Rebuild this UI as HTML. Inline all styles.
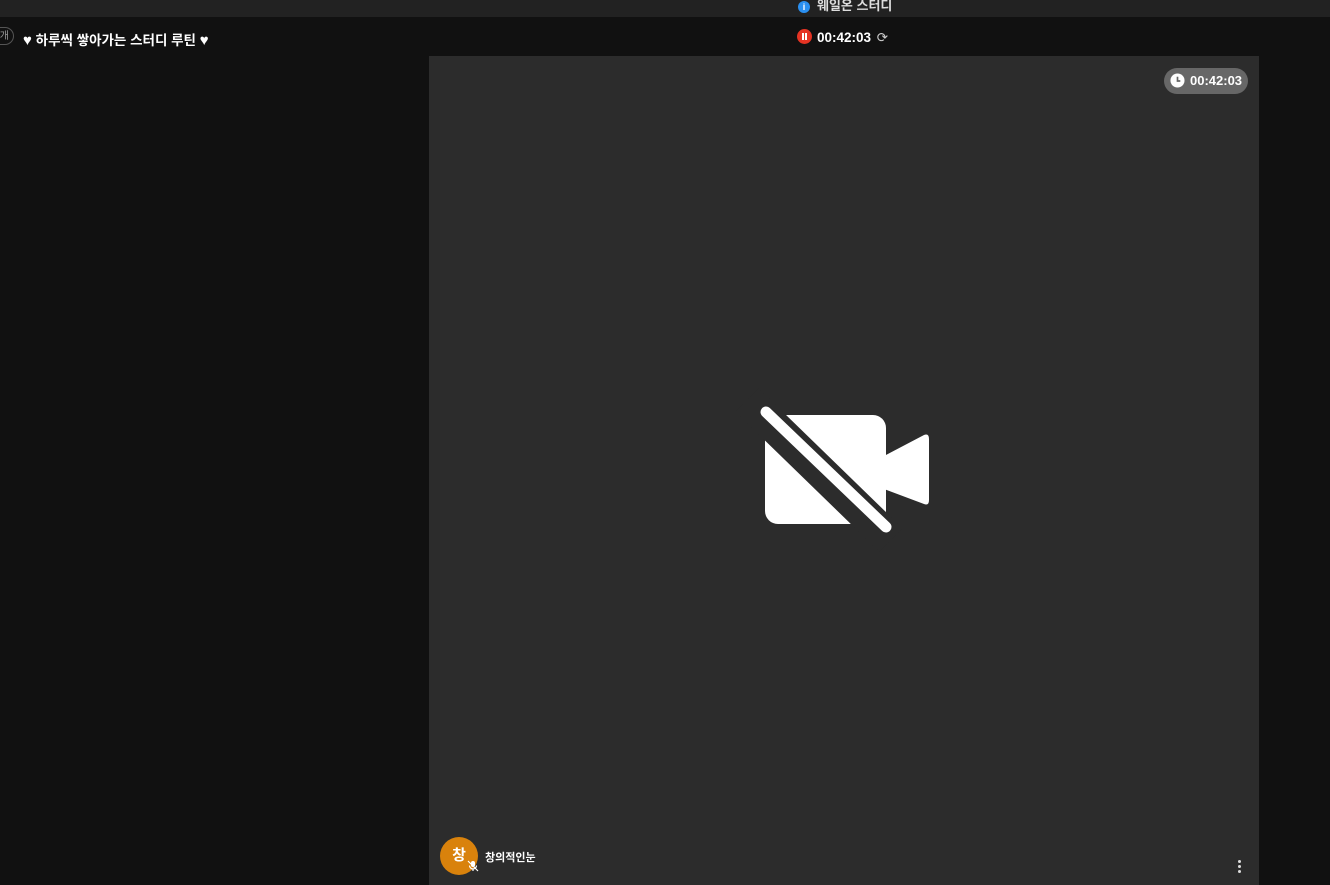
<!DOCTYPE html>
<html><head><meta charset="utf-8"><style>
html,body{margin:0;padding:0;width:1330px;height:885px;overflow:hidden;background:#111;font-family:"Liberation Sans","Noto Sans CJK KR",sans-serif;color:#fff}
.top{position:absolute;left:0;top:0;width:1330px;height:17px;background:#222}
.t1{position:absolute;left:798px;top:-5px;font-size:13px;font-weight:bold;color:#ddd;white-space:nowrap}
.info{display:inline-block;width:12px;height:12px;border-radius:50%;background:#2a8ff0;vertical-align:middle;margin-right:7px;font-size:9px;text-align:center;line-height:12px;color:#fff}
.title{position:absolute;left:23px;top:29px;font-size:13.5px;font-weight:bold;white-space:nowrap}
.heart{font-size:15px;line-height:13px}
.pill{position:absolute;left:-14px;top:27px;width:28px;height:18px;border:1px solid #555;border-radius:10px;font-size:10px;color:#999;line-height:18px;text-align:right;padding-right:4px;box-sizing:border-box}
.timer{position:absolute;left:797px;top:29px;font-size:13.5px;font-weight:bold;white-space:nowrap}
.rec{display:inline-block;width:15px;height:15px;border-radius:50%;background:#e53323;vertical-align:-2px;margin-right:5px;position:relative}
.rec:before,.rec:after{content:"";position:absolute;top:4px;width:2px;height:7px;background:#fff}
.rec:before{left:5px}.rec:after{left:8px}
.tile{position:absolute;left:429px;top:56px;width:830px;height:829px;background:#2c2c2c}
.clock{position:absolute;left:735px;top:12px;width:84px;height:26px;border-radius:13px;background:#676767;font-size:13px;font-weight:bold;line-height:26px}
.av{position:absolute;left:11px;top:781px;width:38px;height:38px;border-radius:50%;background:#d9820c;font-size:15px;font-weight:bold;text-align:center;line-height:38px}
.name{position:absolute;left:56px;top:793px;font-size:11px;font-weight:bold}
</style></head><body>
<div class="top"><div class="t1"><span class="info">i</span>웨일온 스터디</div></div>
<div class="pill">개</div>
<div class="title"><span class="heart">♥</span> 하루씩 쌓아가는 스터디 루틴 <span class="heart">♥</span></div>
<div class="timer"><span class="rec"></span>00:42:03 <span style="font-weight:normal;color:#ccc;margin-left:2px">⟳</span></div>
<div class="tile">
<div class="clock"><svg width="15" height="15" style="position:absolute;left:6px;top:5px" viewBox="0 0 16 16"><circle cx="8" cy="8" r="7.5" fill="#fff"/><path d="M8 4v4.5h3" stroke="#676767" stroke-width="1.8" fill="none"/></svg><span style="position:absolute;left:26px">00:42:03</span></div>
<svg style="position:absolute;left:0;top:0" width="830" height="829">
<g transform="translate(-429,-56)">
<rect x="765" y="415" width="121" height="109" rx="13" fill="#fff"/>
<path d="M884 456 L924 435 Q929 433 929 439 L929 500 Q929 506 924 504 L884 489 Z" fill="#fff"/>
<line x1="747" y1="400" x2="891" y2="540" stroke="#2c2c2c" stroke-width="33"/>
<line x1="766" y1="412" x2="886" y2="527" stroke="#fff" stroke-width="11" stroke-linecap="round"/>
</g></svg>
<div class="av">창</div>
<svg style="position:absolute;left:38px;top:804px" width="12" height="12" viewBox="0 0 12 12"><rect x="4" y="1" width="4" height="6" rx="2" fill="#fff"/><path d="M2.5 5.5a3.5 3.5 0 0 0 7 0M6 9v2M1 1l10 10" stroke="#fff" stroke-width="1.2" fill="none"/></svg>
<div class="name">창의적인눈</div>
<div style="position:absolute;left:809px;top:804px;width:3px">
<div style="width:3px;height:3px;border-radius:50%;background:#ddd;margin-bottom:2px"></div>
<div style="width:3px;height:3px;border-radius:50%;background:#ddd;margin-bottom:2px"></div>
<div style="width:3px;height:3px;border-radius:50%;background:#ddd"></div></div>
</div>
</body></html>
